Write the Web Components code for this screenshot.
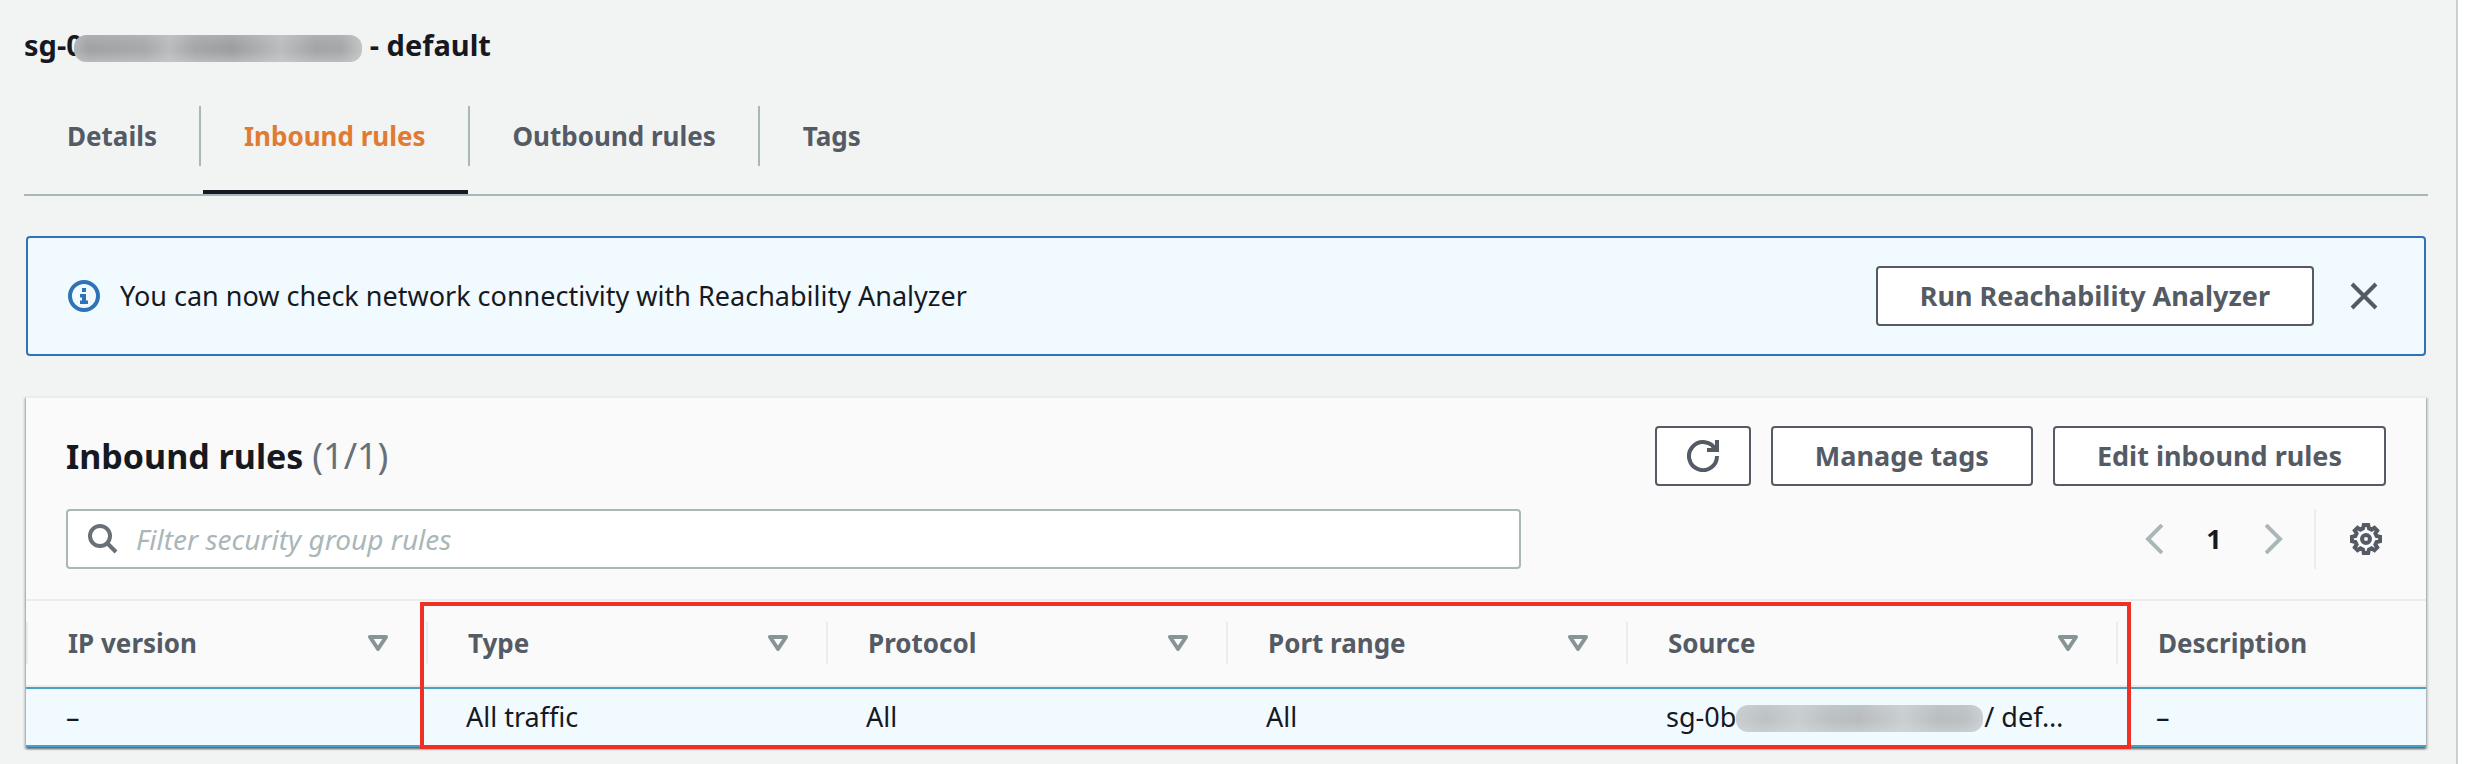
<!DOCTYPE html>
<html lang="en">
<head>
<meta charset="utf-8">
<title>Security group - Inbound rules</title>
<style>
  body {
    margin: 0;
    background: #fff;
    color: #16191f;
    font: 27px/42px "Noto Sans", "Open Sans", sans-serif;
  }
</style>
</head>
<body>
<sg-page>
  <sg-title slot="title"></sg-title>
  <sg-tabs></sg-tabs>
  <sg-alert>You can now check network connectivity with Reachability Analyzer
    <sg-button slot="action">Run Reachability Analyzer</sg-button>
  </sg-alert>
  <sg-panel>
    <span slot="heading">Inbound rules</span>
    <span slot="count">(1/1)</span>
    <sg-button slot="actions" icon label="Refresh">
      <svg width="32" height="32" viewBox="0 0 16 16" fill="none" stroke="#545b64" stroke-width="2" style="display:block"><path d="M15 0v5h-5"/><path d="M15 8a7 7 0 1 1-.7-3"/><path d="M12 4h3V2z" fill="#545b64" stroke="none"/></svg>
    </sg-button>
    <sg-button slot="actions">Manage tags</sg-button>
    <sg-button slot="actions">Edit inbound rules</sg-button>
    <sg-rules-table></sg-rules-table>
  </sg-panel>
</sg-page>

<script>
const define = (name, html, setup) => {
  const template = document.createElement('template');
  template.innerHTML = html;
  customElements.define(name, class extends HTMLElement {
    constructor() {
      super();
      this.attachShadow({ mode: 'open' }).append(template.content.cloneNode(true));
    }
    connectedCallback() {
      if (setup) setup(this, this.shadowRoot);
    }
  });
};

define('sg-page', `
  <style>
    :host { display: block; min-height: 100vh; background: #f2f3f3; margin-right: 14px;
      border-right: 2px solid #c9cecf; box-sizing: border-box; }
    main { padding: 24px 28px 14px 24px; }
  </style>
  <main><slot name="title"></slot><slot></slot></main>`);

define('sg-redacted', `
  <style>
    :host { display: inline-block; position: relative; height: 27px; border-radius: 12px; }
    :host([tone=dark]) {
      background:
        linear-gradient(#cfd0d140, #cfd0d100 40%, #cfd0d100 60%, #cfd0d180),
        linear-gradient(90deg, #b4b5b6, #a2a3a4 5%, #a9aaab 25%, #bbbcbd 33%, #a6a7a8 42%, #9e9fa0 55%, #bcbdbe 72%, #a4a5a6 84%, #a7a8a9 93%, #c2c4c5);
    }
    :host([tone=light]) {
      background:
        linear-gradient(#d3d9dc40, #d3d9dc00 40%, #d3d9dc00 60%, #d3d9dc80),
        linear-gradient(90deg, #c8cdd0, #bdc2c4 12%, #c9ced1 25%, #bcc1c3 38%, #b9bdc0 50%, #cacfd2 68%, #b9bec0 82%, #bcc1c3 93%, #cbd1d4);
    }
  </style>`);

define('sg-title', `
  <style>
    :host { display: block; margin-bottom: 40px; }
    h2 { display: flex; align-items: center; margin: 0; font-size: 29px; line-height: 42px; font-weight: 700; }
    sg-redacted { width: 288px; margin: 7px 8px 0 -9px; }
  </style>
  <h2><span>sg-0</span><sg-redacted tone="dark"></sg-redacted><span>- default</span></h2>`);

define('sg-tabs', `
  <style>
    :host { display: block; }
    nav { display: flex; border-bottom: 2px solid #aab7b8; }
    a { position: relative; height: 88px; color: #545b64; font-size: 26px; font-weight: 700;
      line-height: 60px; text-decoration: none; }
    a span { display: block; padding: 0 42px 0 43px; border-right: 2px solid #aab7b8; }
    a:last-child span { border: 0; }
    a[aria-current] { color: #e07b31; }
    a[aria-current]::after { content: ""; position: absolute; left: 2px; right: 2px; bottom: 0;
      height: 4px; background: #16191f; }
  </style>
  <nav aria-label="Security group">
    <a href="#details"><span>Details</span></a>
    <a href="#inbound" aria-current="page"><span>Inbound rules</span></a>
    <a href="#outbound"><span>Outbound rules</span></a>
    <a href="#tags"><span>Tags</span></a>
  </nav>`);

define('sg-button', `
  <style>
    :host { display: block; flex: none; }
    button { box-sizing: border-box; height: 60px; padding: 0 42px; display: flex; align-items: center;
      justify-content: center; border: 2px solid #545b64; border-radius: 4px; background: #fff;
      color: #545b64; font: inherit; font-size: 27px; font-weight: 700; white-space: nowrap; }
    :host([icon]) button { padding: 0 30px; }
  </style>
  <button type="button"><slot></slot></button>`,
  (host, root) => {
    if (host.hasAttribute('label')) root.querySelector('button').setAttribute('aria-label', host.getAttribute('label'));
  });

define('sg-alert', `
  <style>
    :host { display: flex; align-items: center; margin: 40px 2px; padding: 28px 46px 28px 40px;
      border: 2px solid #2e73b8; border-radius: 4px; background: #f1fafe; }
    svg { display: block; flex: none; }
    p { flex: 1; margin: 0 20px; }
    .close { margin: 0 0 0 36px; padding: 0; border: 0; background: none; }
  </style>
  <svg width="32" height="32" viewBox="0 0 16 16"><circle cx="8" cy="8" r="7" fill="none" stroke="#2e73b8" stroke-width="2"/><path fill="#2e73b8" d="M7 4h2v2H7zM6 7h3v3.2h1V12H6v-1.8h1V8.8H6z"/></svg>
  <p><slot></slot></p>
  <slot name="action"></slot>
  <button class="close" type="button" aria-label="Dismiss"><svg width="28" height="28" viewBox="0 0 28 28" stroke="#545b64" stroke-width="4"><path d="M2 2l24 24M26 2L2 26"/></svg></button>`);

define('sg-panel', `
  <style>
    :host { display: block; margin: 0 2px; background: #fafafa; border-top: 2px solid #eaeded;
      box-shadow: 0 2px 2px #001c2480, 2px 2px 2px #001c2426, -2px 2px 2px #001c2426; }
    header { padding: 28px 40px 30px; border-bottom: 2px solid #eaeded; }
    .row { display: flex; align-items: center; }
    .top { gap: 20px; margin-bottom: 23px; }
    h3 { flex: 1; margin: 0; font-size: 34px; }
    .count { color: #687078; font-size: 36px; font-weight: 400; }
    .search { display: flex; align-items: center; box-sizing: border-box; width: 62.7%; height: 60px;
      margin-right: auto; padding: 0 20px; gap: 18px; border: 2px solid #aab7b8; border-radius: 4px; background: #fff; }
    input { flex: 1; min-width: 0; padding: 0; border: 0; outline: 0; background: none; color: inherit; font: inherit;
      font-size: 28px; line-height: 42px; }
    input::placeholder { color: #aab7b8; font-style: italic; opacity: 1; }
    svg { display: block; flex: none; }
    .pager { display: flex; align-items: center; font-weight: 700; }
    .pager button, .gear { padding: 0; border: 0; background: none; }
    .pager span { width: 102px; text-align: center; }
    .gear { margin-left: 31px; padding: 14px 4px 14px 34px; border-left: 2px solid #eaeded; }
  </style>
  <header>
    <div class="row top">
      <h3><slot name="heading"></slot> <span class="count"><slot name="count"></slot></span></h3>
      <slot name="actions"></slot>
    </div>
    <div class="row">
      <label class="search">
        <svg width="30" height="30" viewBox="0 0 30 30" fill="none" stroke="#687078" stroke-width="4"><circle cx="12" cy="12" r="10"/><path d="M19 19l9 9"/></svg>
        <input type="text" placeholder="Filter security group rules" aria-label="Filter security group rules">
      </label>
      <div class="pager">
        <button type="button" aria-label="Previous page"><svg width="18" height="30" viewBox="0 0 18 30" fill="none" stroke="#aab7b8" stroke-width="4"><path d="M17 1L3 15l14 14"/></svg></button>
        <span>1</span>
        <button type="button" aria-label="Next page"><svg width="18" height="30" viewBox="0 0 18 30" fill="none" stroke="#aab7b8" stroke-width="4"><path d="M1 1l14 14L1 29"/></svg></button>
      </div>
      <button class="gear" type="button" aria-label="Preferences">
        <svg width="32" height="32" viewBox="0 0 16 16" fill="none" stroke="#545b64" stroke-width="2"><path d="M6.9 1h2.2l.4 1.7 1.3.6 1.4-.9 1.4 1.4-.9 1.4.6 1.3 1.7.4v2.2l-1.7.4-.6 1.3.9 1.4-1.4 1.4-1.4-.9-1.3.6-.4 1.7H6.9l-.4-1.7-1.3-.6-1.4.9-1.4-1.4.9-1.4-.6-1.3L1 9.1V6.900l1.700-.4.6-1.300-.9-1.400 1.400-1.400 1.400.9 1.300-.6z"/><circle cx="8" cy="8" r="2"/></svg>
      </button>
    </div>
  </header>
  <slot></slot>`);

define('sg-rules-table', `
  <style>
    :host { display: block; position: relative; }
    table { width: 100%; table-layout: fixed; border-spacing: 0; }
    .std { width: 400px; }
    .wide { width: 490px; }
    th, td { box-sizing: border-box; text-align: left; white-space: nowrap; }
    th { position: relative; height: 86px; padding: 0 38px 0 42px; border-bottom: 2px solid #eaeded;
      color: #545b64; font-size: 26px; font-weight: 700; }
    th::before { content: ""; position: absolute; left: 0; top: 21px; width: 2px; height: 42px; background: #eaeded; }
    th div { display: flex; align-items: center; justify-content: space-between; }
    th button { padding: 0; border: 0; background: none; }
    th svg { display: block; }
    td { height: 60px; padding: 0 0 0 40px; border: solid #48a0c7; border-width: 2px 0; background: #f1fafe; }
    td div { display: flex; align-items: center; }
    sg-redacted { width: 247px; margin: 3px 1px 0 0; }
    .highlight { position: absolute; left: 394px; top: 1px; bottom: -2px; width: 1711px; box-sizing: border-box;
      border: 4px solid #ee3124; pointer-events: none; }
  </style>
  <table>
    <colgroup><col class="std"><col class="std"><col class="std"><col class="std"><col class="wide"><col></colgroup>
    <thead><tr></tr></thead>
    <tbody><tr>
      <td>–</td><td>All traffic</td><td>All</td><td>All</td>
      <td><div><span>sg-0b</span><sg-redacted tone="light"></sg-redacted><span>/ def…</span></div></td>
      <td>–</td>
    </tr></tbody>
  </table>
  <div class="highlight"></div>`,
  (host, root) => {
    const row = root.querySelector('thead tr');
    if (row.children.length) return;
    const sort = '<button type="button" aria-label="Sort"><svg width="20" height="16" viewBox="0 0 20 16" fill="none" stroke="#879596" stroke-width="4" stroke-linejoin="round"><path d="M2 2h16l-8 12z"/></svg></button>';
    row.innerHTML = ['IP version', 'Type', 'Protocol', 'Port range', 'Source', 'Description']
      .map((name, i) => `<th scope="col"><div><span>${name}</span>${i < 5 ? sort : ''}</div></th>`).join('');
  });
</script>
</body>
</html>
